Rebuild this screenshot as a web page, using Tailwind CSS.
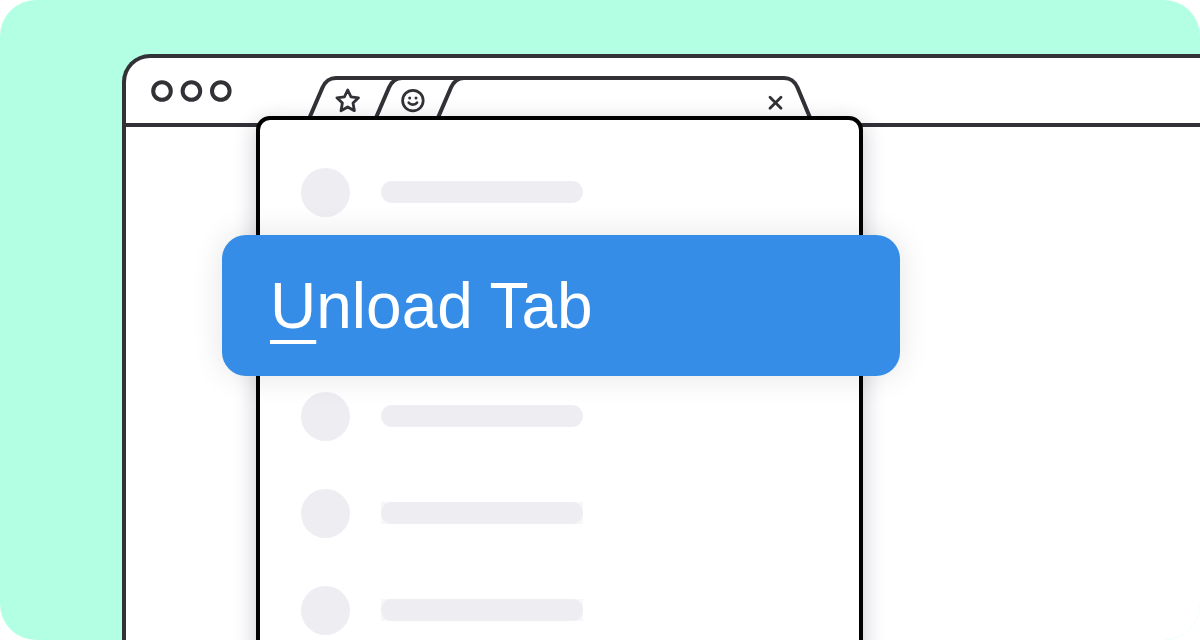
<!DOCTYPE html>
<html lang="en">
<head>
<meta charset="utf-8">
<meta name="viewport" content="width=device-width, initial-scale=1">
<title>Unload Tab</title>
<script src="https://cdn.jsdelivr.net/npm/@tailwindcss/browser@4"></script>
</head>
<body class="bg-white font-['Liberation_Sans',Arial,sans-serif]">
<main class="relative h-screen overflow-hidden rounded-[36px] bg-[#b3ffe3] pt-[54px] pl-[122px]">
  <!-- Browser window -->
  <section class="h-full rounded-tl-[28px] border-t-4 border-l-4 border-[#313136] bg-white">
    <header class="flex h-[69px] items-start border-b-4 border-[#313136] pl-6">
      <svg class="mt-5 h-6 w-[84px] shrink-0" viewBox="0 0 84 24" fill="none" stroke="#313136" stroke-width="4" aria-hidden="true">
        <circle cx="12" cy="13" r="8.8"/><circle cx="41.4" cy="13" r="8.8"/><circle cx="70.8" cy="13" r="8.8"/>
      </svg>
      <nav class="relative mt-4 ml-[72px] flex h-[50px] w-[508px] shrink-0 items-end pr-[30px] pb-[9px] pl-7" aria-label="Tabs">
        <svg class="absolute inset-0 h-full w-full" viewBox="306 74 508 50" fill="none" stroke="#313136" stroke-width="4" aria-hidden="true">
          <path d="M308.500 120 322.500 87.500C325.500 81 329 78 336 78H784C791 78 794.500 81 797.500 87.500L811 120"/>
          <path d="M375 120 389 87.500C392 81 395.500 78 402 78M437 120 451 87.500C454 81 457.500 78 464 78"/>
        </svg>
        <button class="relative h-7 w-7" aria-label="Starred tab">
          <svg class="h-7 w-7" viewBox="0 0 28 28" fill="none" stroke="#313136" stroke-width="2.8" stroke-linejoin="round"><path d="M13.700 3 17 9.800 24.500 10.800 19 16.100 20.400 23.700 13.700 20 7 23.700 8.400 16.100 2.900 10.800 10.400 9.800Z"/></svg>
        </button>
        <button class="relative ml-[37px] h-7 w-7" aria-label="Smiley tab">
          <svg class="h-7 w-7" viewBox="0 0 28 28" fill="none" stroke="#313136" stroke-width="2.700" stroke-linecap="round"><circle cx="13.900" cy="13.600" r="10.300"/><path d="M9.800 15.700Q11.200 17.600 13.900 17.600T18 15.700"/><g fill="#313136" stroke="none"><circle cx="10.700" cy="10.900" r="1.500"/><circle cx="17" cy="10.900" r="1.500"/></g></svg>
        </button>
        <button class="relative ml-auto h-7 w-5" aria-label="Close tab">
          <svg class="h-7 w-5" viewBox="0 0 20 28" fill="none" stroke="#313136" stroke-width="2.800" stroke-linecap="round"><path d="M6 10.200 17 21.200M17 10.200 6 21.200"/></svg>
        </button>
      </nav>
    </header>
  </section>

  <!-- Context menu over the window -->
  <div class="absolute top-[116px] -bottom-6 left-[256px] w-[607px] rounded-t-[14px] border-4 border-black bg-white px-[41px] pt-12 shadow-[0_6px_22px_rgba(20,20,50,0.24)]">
    <div class="flex items-start gap-[31px]"><span class="size-[49px] rounded-full bg-[#eeedf2]"></span><span class="mt-[13px] h-[22px] w-[202px] rounded-full bg-[#eeedf2]"></span></div>
    <div class="mt-[175px] flex flex-col gap-12">
      <div class="flex items-start gap-[31px]"><span class="size-[49px] rounded-full bg-[#eeedf2]"></span><span class="mt-[13px] h-[22px] w-[202px] rounded-full bg-[#eeedf2]"></span></div>
      <div class="flex items-start gap-[31px]"><span class="size-[49px] rounded-full bg-[#eeedf2]"></span><span class="mt-[13px] flex bg-[#f7f6f9]"><span class="h-[22px] w-[202px] rounded-full bg-[#eeedf2]"></span></span></div>
      <div class="flex items-start gap-[31px]"><span class="size-[49px] rounded-full bg-[#eeedf2]"></span><span class="mt-[13px] flex bg-[#f7f6f9]"><span class="h-[22px] w-[202px] rounded-full bg-[#eeedf2]"></span></span></div>
    </div>
  </div>

  <!-- Highlighted menu item -->
  <button class="absolute top-[235px] left-[222px] flex h-[141px] w-[678px] items-center rounded-3xl bg-[#358de8] pl-12 text-left text-[64px] leading-[80px] text-white shadow-[0_0_32px_rgba(0,0,0,0.11)]"><span><u class="decoration-4 underline-offset-[12px] [text-decoration-skip-ink:none]">U</u>nload Tab</span></button>
</main>
</body>
</html>
